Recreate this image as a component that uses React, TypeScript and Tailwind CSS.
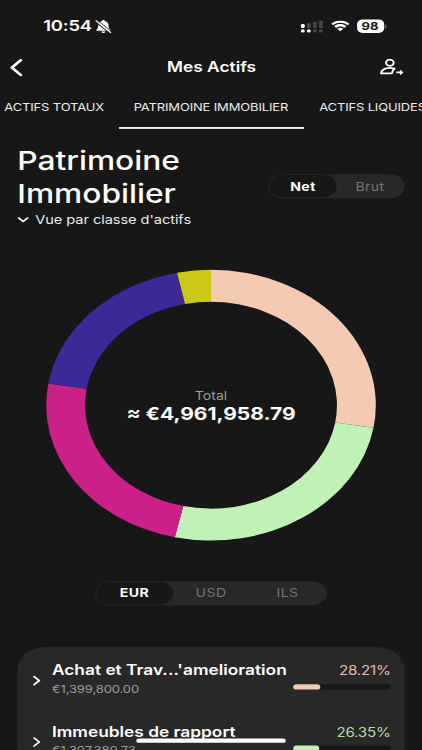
import React, { useState } from 'react';

interface Slice {
  color: string;
  from: number;
  to: number;
}

interface AssetClass {
  name: string;
  amount: string;
  percent: number;
  textColor: string;
  barColor: string;
}

const slices: Slice[] = [
  { color: '#f4cab3', from: 0, to: 99.6 },
  { color: '#bff2b4', from: 99.6, to: 192.7 },
  { color: '#cb2089', from: 192.7, to: 279.2 },
  { color: '#3c2896', from: 279.2, to: 348.1 },
  { color: '#cbc915', from: 348.1, to: 360 },
];

const assetClasses: AssetClass[] = [
  {
    name: "Achat et Trav...'amelioration",
    amount: '€1,399,800.00',
    percent: 28.21,
    textColor: 'text-[#e3bda8]',
    barColor: 'bg-[#f4cab3]',
  },
  {
    name: 'Immeubles de rapport',
    amount: '€1,307,380.73',
    percent: 26.35,
    textColor: 'text-[#b0dfa6]',
    barColor: 'bg-[#bff2b4]',
  },
];

const OUTER = 152.3;
const INNER = 116.4;

const point = (radius: number, angle: number) => {
  const rad = ((angle - 90) * Math.PI) / 180;
  return `${(radius * Math.cos(rad)).toFixed(2)} ${(radius * Math.sin(rad)).toFixed(2)}`;
};

const slicePath = ({ from, to }: Slice) =>
  `M${point(OUTER, from)} A${OUTER} ${OUTER} 0 0 1 ${point(OUTER, to)} L${point(INNER, to)} A${INNER} ${INNER} 0 0 0 ${point(INNER, from)}Z`;

const StatusBar: React.FC = () => (
  <div className="flex h-[59px] shrink-0 items-center pl-10 pr-[33px]">
    <span className="w-[46px] text-[17px] font-semibold leading-none tracking-[-0.2px]">10:54</span>
    <svg className="ml-[2px]" width="15" height="16" viewBox="0 0 15 16" fill="white">
      <path d="M7.5 0.6c-.8 0-1.4.5-1.5 1.2C3.7 2.4 2.7 4.3 2.7 6.6c0 2.6-.6 3.8-1.5 4.7-.5.5-.4 1.3.5 1.3h11.6c.9 0 1-.8.5-1.3-.9-.9-1.5-2.1-1.5-4.7 0-2.3-1-4.2-3.3-4.8C8.9 1.1 8.3.6 7.5.6z" />
      <path d="M5.5 13.5h4c-.2 1.1-1 1.7-2 1.7s-1.8-.6-2-1.7z" />
      <path d="M0.5 2.8L13.5 15.4" stroke="#171717" strokeWidth="1.1" />
      <path d="M0.7 1.2L14.3 14.6" stroke="white" strokeWidth="1.3" strokeLinecap="round" />
      <path d="M2 0.8L15 13.4" stroke="#171717" strokeWidth="0.8" />
    </svg>
    <div className="ml-auto flex items-center">
      <svg width="21" height="14" viewBox="0 0 21 14">
        <rect x="0" y="4" width="3.6" height="4.6" rx="1.5" fill="white" />
        <rect x="5.6" y="3" width="3.6" height="5.6" rx="1" fill="#454545" />
        <rect x="11.2" y="1.6" width="3.6" height="7" rx="1" fill="#454545" />
        <rect x="16.8" y="0" width="3.6" height="8.6" rx="1" fill="#454545" />
        <rect x="0" y="10" width="3.6" height="3.6" rx="1.7" fill="white" />
        <rect x="5.6" y="10" width="3.6" height="3.6" rx="1.7" fill="white" />
        <rect x="11.2" y="10" width="3.6" height="3.6" rx="1.4" fill="#454545" />
        <rect x="16.8" y="10" width="3.6" height="3.6" rx="1.4" fill="#454545" />
      </svg>
      <svg className="ml-[6.5px]" width="17" height="13" viewBox="0 0 17 13" fill="white">
        <path d="M8.5 2.6c2.4 0 4.7.9 6.4 2.6.1.1.3.1.5 0l1.2-1.3c.1-.1.1-.4 0-.5-4.5-4.5-11.7-4.5-16.2 0-.1.1-.1.4 0 .5l1.2 1.3c.2.1.4.1.5 0C3.8 3.5 6.1 2.6 8.5 2.6z" />
        <path d="M8.5 6.7c1.3 0 2.6.5 3.6 1.4.1.1.4.1.5 0l1.3-1.3c.1-.2.1-.4 0-.5-3-2.9-7.8-2.9-10.8 0-.1.1-.1.4 0 .5l1.3 1.3c.1.1.4.1.5 0 1-.9 2.3-1.4 3.6-1.4z" />
        <path d="M11 9.6c.1-.2.1-.4 0-.5-1.5-1.2-3.5-1.2-5 0-.2.1-.2.3 0 .5l2.2 2.3c.2.2.4.2.6 0L11 9.6z" />
      </svg>
      <div className="ml-[7px] flex h-[14.5px] w-[25px] items-center justify-center rounded-[5px] bg-white pt-[1.5px] text-[12px] font-bold leading-none text-[#171717]">
        98
      </div>
      <div className="ml-[1px] h-[4px] w-[1.5px] rounded-r-full bg-[#8a8a8a]" />
    </div>
  </div>
);

const Header: React.FC = () => (
  <header className="flex h-[33px] shrink-0 items-center pl-[9px] pr-[17px]">
    <svg width="22" height="20" viewBox="0 0 22 20" fill="none" stroke="white" strokeWidth="2.8" strokeLinecap="round" strokeLinejoin="round">
      <path d="M10.2 1.6L2 10l8.2 8.4" />
    </svg>
    <h1 className="flex-1 pb-[2px] pl-[9px] text-center text-[16px] font-semibold leading-none">Mes Actifs</h1>
    <svg width="22" height="19" viewBox="0 0 22 19" fill="none" stroke="white" strokeWidth="1.9" strokeLinejoin="round">
      <circle cx="9.3" cy="4.6" r="3.5" />
      <path d="M13.6 11.2C10.5 10.2 6 10.4 3.4 12.2c-1.4 1-2.2 2.6-2.2 4.4h9.9c.2-2.1 1-3.9 2.5-5.4z" />
      <path d="M15.2 15.5h4" />
      <path d="M18.6 12.2l3.4 3.3-3.4 3.3z" fill="white" stroke="none" />
    </svg>
  </header>
);

const tabs = [
  { label: 'ACTIFS TOTAUX', width: 'w-[119.5px]' },
  { label: 'PATRIMOINE IMMOBILIER', width: 'w-[171.5px]' },
  { label: 'ACTIFS LIQUIDES', width: 'w-[130px]' },
];

const Tabs: React.FC = () => (
  <nav className="-ml-[10px] flex h-[53px] shrink-0">
    {tabs.map((tab) => (
      <div
        key={tab.label}
        className={`${tab.width} shrink-0 whitespace-nowrap border-b-[2.5px] pl-[14px] pt-[21px] text-[12px] leading-[16px] tracking-[-0.14px] ${
          tab.label === 'PATRIMOINE IMMOBILIER' ? 'border-white' : 'border-transparent'
        } text-[#ececec]`}
      >
        {tab.label}
      </div>
    ))}
  </nav>
);

interface SegmentedProps {
  options: string[];
  value: string;
  onChange: (value: string) => void;
  className: string;
}

const Segmented: React.FC<SegmentedProps> = ({ options, value, onChange, className }) => (
  <div className={`flex h-[27px] rounded-full bg-[#282828] p-px ${className}`}>
    {options.map((option) => (
      <button
        key={option}
        onClick={() => onChange(option)}
        className={`flex-1 rounded-full pt-px text-[13px] leading-none tracking-[0.4px] ${
          option === value ? 'bg-[#171717] font-bold text-white' : 'text-[#747474]'
        }`}
      >
        {option}
      </button>
    ))}
  </div>
);

const Donut: React.FC = () => (
  <div className="grid h-[306px] place-items-center">
    <svg className="col-start-1 row-start-1" width="306" height="306" viewBox="-153 -153 306 306">
      {slices.map((slice) => (
        <path key={slice.color} d={slicePath(slice)} fill={slice.color} />
      ))}
    </svg>
    <div className="col-start-1 row-start-1 flex flex-col items-center whitespace-nowrap pb-px">
      <span className="text-[13px] leading-[20px] text-[#9a9a9a]">Total</span>
      <span className="text-[19.4px] font-bold leading-[22px]">≈ €4,961,958.79</span>
    </div>
  </div>
);

const AssetRow: React.FC<{ asset: AssetClass }> = ({ asset }) => (
  <div className="flex h-[69px] items-start pl-[14px] pr-[13px] pt-[15px]">
    <svg className="mt-[17px]" width="8" height="12" viewBox="0 0 8 12" fill="none" stroke="white" strokeWidth="1.8" strokeLinecap="round" strokeLinejoin="round">
      <path d="M1.5 1.5l4.8 4.5-4.8 4.5" />
    </svg>
    <div className="ml-[10px] whitespace-nowrap">
      <div className="text-[16px] font-semibold leading-[22px]">{asset.name}</div>
      <div className="text-[12px] leading-[21px] tracking-[-0.1px] text-[#9b9b9b]">{asset.amount}</div>
    </div>
    <div className="ml-auto flex w-[90px] shrink-0 flex-col">
      <div className={`pt-px text-right text-[14px] leading-[22px] tracking-[-0.2px] ${asset.textColor}`}>{asset.percent}%</div>
      <div className="mt-[4px] h-[6.5px] rounded-full bg-[#171717]">
        <div className={`h-full rounded-full ${asset.barColor}`} style={{ width: `${asset.percent}%` }} />
      </div>
    </div>
  </div>
);

const App: React.FC = () => {
  const [mode, setMode] = useState('Net');
  const [currency, setCurrency] = useState('EUR');

  return (
    <div className="h-[750px] w-[422px] overflow-hidden bg-[#171717]">
      <div className="relative flex h-[844px] w-[390px] origin-top-left scale-x-[1.0821] scale-y-[0.8886] flex-col overflow-hidden bg-[#171717] font-['Inter',sans-serif] text-white">
        <StatusBar />
        <Header />
        <Tabs />
        <section className="flex h-[113px] shrink-0 justify-between px-4 pt-[16px]">
          <div>
            <h2 className="w-[160px] pt-px text-[29.3px] font-medium leading-[37px]">Patrimoine Immobilier</h2>
            <div className="flex items-center whitespace-nowrap">
              <svg width="11" height="7" viewBox="0 0 11 7" fill="none" stroke="white" strokeWidth="1.6" strokeLinecap="round" strokeLinejoin="round">
                <path d="M1.2 1.2l4.2 4 4.2-4" />
              </svg>
              <span className="ml-[5.5px] text-[13.5px] leading-[22px] tracking-[-0.06px] text-[#ececec]">Vue par classe d'actifs</span>
            </div>
          </div>
          <Segmented options={['Net', 'Brut']} value={mode} onChange={setMode} className="-ml-10 mt-[35px] w-[126px]" />
        </section>
        <div className="mt-[45.4px] shrink-0">
          <Donut />
        </div>
        <Segmented options={['EUR', 'USD', 'ILS']} value={currency} onChange={setCurrency} className="mx-auto mt-[44.6px] w-[214px] shrink-0" />
        <section className="mx-4 mt-[47px] h-[180px] shrink-0 rounded-t-[26px] bg-[#282828]">
          {assetClasses.map((asset) => (
            <AssetRow key={asset.name} asset={asset} />
          ))}
        </section>
        <div className="absolute bottom-[8px] left-[126px] h-[5.5px] w-[138px] rounded-full bg-white" />
      </div>
    </div>
  );
};

export default App;
